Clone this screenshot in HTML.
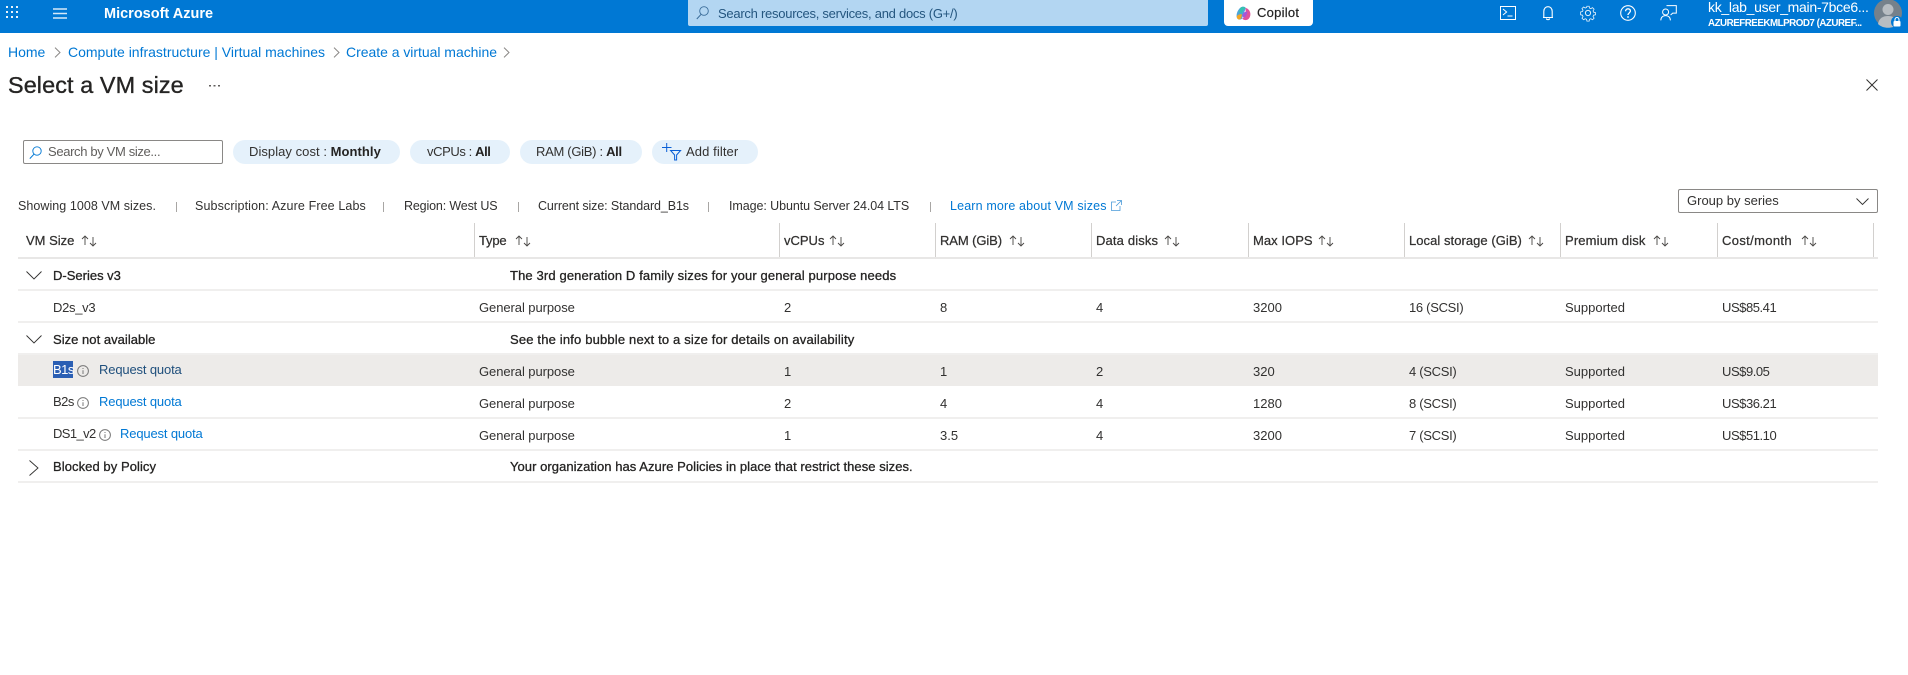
<!DOCTYPE html>
<html lang="en"><head><meta charset="utf-8"><title>Select a VM size</title>
<style>
html,body{margin:0;padding:0;background:#fff}
#p{position:relative;width:1908px;height:675px;overflow:hidden;background:#fff;font-family:"Liberation Sans",sans-serif;font-size:13px;color:#323130}
#p span,#p div,#p svg{position:absolute}
.t{white-space:nowrap;line-height:20px;height:20px}
.h{-webkit-text-stroke:.25px currentColor;color:#323130}
.g{-webkit-text-stroke:.3px currentColor;color:#252423}
.l{color:#0078d4}
.sep{width:1px;height:35px;top:223px;background:#d2d0ce}
.ln{left:18px;width:1860px;height:2px;background:#f0efee}
.pill{top:140px;height:24px;border-radius:12px;background:#e5f1fb}
.bar{width:1px;height:10px;top:202px;background:#a8a6a4}
.rq{letter-spacing:-.15px}
.us{letter-spacing:-.45px}
.sc{letter-spacing:-.3px}
svg{overflow:visible;fill:none}
</style></head><body><div id="p">

<div style="left:0;top:0;width:1908px;height:33px;background:#0078d4"></div>
<svg style="left:6px;top:6px" width="12" height="12"><g fill="#e8f3fb"><rect x="0" y="0" width="2" height="2"/><rect x="5" y="0" width="2" height="2"/><rect x="10" y="0" width="2" height="2"/><rect x="0" y="5" width="2" height="2"/><rect x="5" y="5" width="2" height="2"/><rect x="10" y="5" width="2" height="2"/><rect x="0" y="10" width="2" height="2"/><rect x="5" y="10" width="2" height="2"/><rect x="10" y="10" width="2" height="2"/></g></svg>
<svg style="left:53px;top:8px" width="14" height="11"><path d="M0 1h14M0 5.500h14M0 10h14" stroke="#d6e9f8" stroke-width="1.4"/></svg>
<span class="t" style="left:104px;top:4px;color:#fff;font-size:14.5px;font-weight:bold">Microsoft Azure</span>

<div style="left:688px;top:0;width:520px;height:26px;background:#b3d6f2;border-radius:0 0 2px 2px"></div>
<svg style="left:696px;top:6px" width="13" height="14"><circle cx="8" cy="5" r="4.3" stroke="#3a6c99" stroke-width=".9"/><path d="M5 8.400L.8 13" stroke="#3a6c99"/></svg>
<span class="t" style="left:718px;top:4px;color:#24567f;font-size:13px;letter-spacing:-.26px">Search resources, services, and docs (G+/)</span>

<div style="left:1224px;top:0;width:89px;height:26px;background:#fff;border-radius:0 0 4px 4px"></div>
<svg style="left:1236px;top:6px" width="15" height="15"><path d="M5 1.200C7 .2 9 .6 9.800 2L8 7 6 12.600C4 14.400 1.400 13.600.8 11.400.2 9 1 6 2.400 4 3.200 2.600 4 1.800 5 1.200z" fill="#4fa3d8"/><path d="M5 1.200C6.500.5 8.500.8 9.600 2 7.600 3.200 6.200 5.400 5.400 7.600L3 6.600C3.400 4.400 4 2.400 5 1.200z" fill="#36c2b0"/><path d="M1 10C2 8.600 3.800 8 6 8.400L5.400 11.400C5 13 3.400 14 2 13.200.8 12.400.5 11 1 10z" fill="#f5a623"/><path d="M9.600 2C11.600 2.200 13.600 4.200 14.200 6.600 14.800 9 14 12 12 13.400 10.600 14.400 8 14.400 6 12.600 8.200 12 9.200 10 9.600 8z" fill="#e0529c"/><path d="M8 6.400L11.400 5.400C11.200 8.400 9.800 11 7.600 12L6.200 9.400z" fill="#a557d8"/></svg>
<span class="t" style="left:1257px;top:3px;color:#242424;font-size:13px;-webkit-text-stroke:.2px #242424;letter-spacing:.25px">Copilot</span>

<svg style="left:1500px;top:6px" width="16" height="14"><rect x=".5" y=".5" width="15" height="13" stroke="#fff"/><path d="M3 3l3.600 3L3 9M7.500 10h5" stroke="#fff"/></svg>
<svg style="left:1542px;top:6px" width="12" height="15"><path d="M1 11.500h10M1.800 11.500V5.400C1.800 2.700 3.600 .7 6 .7s4.200 2 4.200 4.700v6.100M4.400 12.500C4.600 14 7.400 14 7.600 12.500" stroke="#fff" stroke-width="1.1"/></svg>
<svg style="left:1580px;top:5px" width="16" height="16"><circle cx="8" cy="8" r="2.6" stroke="#e3f0fa"/><path d="M6.800.7h2.400l.4 2 1.400.6 1.800-1.100 1.700 1.700-1.100 1.800.6 1.400 2 .4v2.400l-2 .4-.6 1.400 1.100 1.800-1.700 1.700-1.800-1.100-1.400.6-.4 2H6.800l-.4-2-1.400-.6-1.800 1.100-1.700-1.700 1.100-1.800-.6-1.400-2-.4V6.800l2-.4.6-1.400-1.100-1.800 1.700-1.700 1.800 1.100 1.400-.6z" stroke="#e3f0fa" stroke-width=".9" transform="translate(.6 .6) scale(.93)"/></svg>
<svg style="left:1620px;top:5px" width="16" height="16"><circle cx="8" cy="8" r="7.300" stroke="#fff" stroke-width="1.1"/><path d="M5.600 6.200C5.600 4.700 6.700 3.800 8 3.800s2.400.9 2.400 2.200c0 1.900-2.400 2-2.400 4" stroke="#fff" stroke-width="1.300"/><circle cx="8" cy="12" r=".9" fill="#fff"/></svg>
<svg style="left:1660px;top:5px" width="17" height="16"><path d="M6.500 .6h9.800v7.500h-3.600L10.600 10" stroke="#fff"/><circle cx="5.600" cy="7" r="3" stroke="#fff"/><path d="M.8 15.400C.8 12.400 2.800 10.600 5.600 10.600s4.800 1.800 4.800 4.800" stroke="#fff"/></svg>

<span class="t" style="left:1708px;top:-3px;color:#fff;font-size:14px;letter-spacing:-.3px">kk_lab_user_main-7bce6...</span>
<span class="t" style="left:1708px;top:14px;color:#fff;font-size:9.800px;font-weight:bold;letter-spacing:-.5px">AZUREFREEKMLPROD7 (AZUREF...</span>
<svg style="left:1874px;top:0" width="30" height="28"><circle cx="14" cy="13" r="14" fill="#76818b"/><circle cx="14" cy="9.500" r="5.500" fill="#b8bdc2"/><path d="M4 24C5 18 9 16 14 16s9 2 10 8c-5 5-15 5-20 0z" fill="#b8bdc2"/><circle cx="23" cy="22" r="6" fill="#0078d4"/><rect x="19.500" y="21" width="7" height="5.500" rx="1" fill="#fff"/><path d="M21 21v-1.500a2 2 0 014 0V21" stroke="#fff" stroke-width="1.1"/></svg>

<span class="t l" style="left:8px;top:42px;font-size:14px">Home</span>
<svg style="left:54px;top:47px" width="7" height="11"><path d="M1 .6L6 5.500 1 10.400" stroke="#8a8886"/></svg>
<span class="t l" style="left:68px;top:42px;font-size:14px">Compute infrastructure | Virtual machines</span>
<svg style="left:333px;top:47px" width="7" height="11"><path d="M1 .6L6 5.500 1 10.400" stroke="#8a8886"/></svg>
<span class="t l" style="left:346px;top:42px;font-size:14px;letter-spacing:-.03px">Create a virtual machine</span>
<svg style="left:503px;top:47px" width="7" height="11"><path d="M1 .6L6 5.500 1 10.400" stroke="#8a8886"/></svg>

<span class="t" style="left:8px;top:75px;font-size:23.400px;color:#252423;-webkit-text-stroke:.35px #252423;letter-spacing:.1px">Select a VM size</span>
<svg style="left:209px;top:84px" width="12" height="3"><g fill="#605e5c"><rect x="0" y="1" width="2" height="1.500"/><rect x="4.500" y="1" width="2" height="1.500"/><rect x="9" y="1" width="2" height="1.500"/></g></svg>
<svg style="left:1866px;top:79px" width="12" height="12"><path d="M.5.5l11 11M11.500.5l-11 11" stroke="#323130"/></svg>

<div style="left:23px;top:140px;width:198px;height:22px;border:1px solid #8a8886;border-radius:2px"></div>
<svg style="left:29px;top:146px" width="13" height="13"><circle cx="8" cy="5" r="4.200" stroke="#0078d4" stroke-width=".9"/><path d="M5 8.200L.8 12.600" stroke="#0078d4"/></svg>
<span class="t" style="left:48px;top:142px;color:#605e5c;letter-spacing:-.35px">Search by VM size...</span>

<div class="pill" style="left:233px;width:167px"></div>
<span class="t" style="left:249px;top:142px;letter-spacing:.05px">Display cost : <b style="color:#252423">Monthly</b></span>
<div class="pill" style="left:410px;width:100px"></div>
<span class="t" style="left:427px;top:142px;letter-spacing:-.4px">vCPUs : <b style="color:#252423">All</b></span>
<div class="pill" style="left:520px;width:122px"></div>
<span class="t" style="left:536px;top:142px;letter-spacing:-.3px">RAM (GiB) : <b style="color:#252423">All</b></span>
<div class="pill" style="left:652px;width:106px"></div>
<svg style="left:662px;top:143px" width="20" height="18"><path d="M0 4.500h9.500M4.700 0v9" stroke="#0a5fd6"/><path d="M8.600 7.500h10l-4 4.500v5h-2v-5z" stroke="#0a5fd6"/></svg>
<span class="t" style="left:686px;top:142px;letter-spacing:.1px">Add filter</span>

<span class="t" style="left:18px;top:196px;font-size:12.500px;letter-spacing:.05px">Showing 1008 VM sizes.</span>
<div class="bar" style="left:176px"></div>
<span class="t" style="left:195px;top:196px;font-size:12.500px;letter-spacing:.12px">Subscription: Azure Free Labs</span>
<div class="bar" style="left:383px"></div>
<span class="t" style="left:404px;top:196px;font-size:12.500px;letter-spacing:-.15px">Region: West US</span>
<div class="bar" style="left:518px"></div>
<span class="t" style="left:538px;top:196px;font-size:12.500px;letter-spacing:-.1px">Current size: Standard_B1s</span>
<div class="bar" style="left:708px"></div>
<span class="t" style="left:729px;top:196px;font-size:12.500px;letter-spacing:-.08px">Image: Ubuntu Server 24.04 LTS</span>
<div class="bar" style="left:930px"></div>
<span class="t l" style="left:950px;top:196px;font-size:12.500px;letter-spacing:.15px">Learn more about VM sizes</span>
<svg style="left:1111px;top:200px" width="11" height="11"><path d="M5 2H.5v8.500H9V6M6 .5h4.500V5M10.500.5L5 6" stroke="#4a9ad9" stroke-width=".8"/></svg>

<div style="left:1678px;top:189px;width:198px;height:22px;border:1px solid #8a8886;border-radius:2px"></div>
<span class="t" style="left:1687px;top:191px">Group by series</span>
<svg style="left:1856px;top:198px" width="13" height="7"><path d="M.5.5L6.500 6.500 12.500.5" stroke="#323130" stroke-width=".9"/></svg>

<!-- header -->
<span class="t h" style="left:26px;top:231px">VM Size</span>
<span class="t h" style="left:479px;top:231px;letter-spacing:-.2px">Type</span>
<span class="t h" style="left:784px;top:231px">vCPUs</span>
<span class="t h" style="left:940px;top:231px;letter-spacing:-.1px">RAM (GiB)</span>
<span class="t h" style="left:1096px;top:231px;letter-spacing:.15px">Data disks</span>
<span class="t h" style="left:1253px;top:231px;letter-spacing:.05px">Max IOPS</span>
<span class="t h" style="left:1409px;top:231px;letter-spacing:.05px">Local storage (GiB)</span>
<span class="t h" style="left:1565px;top:231px;letter-spacing:.15px">Premium disk</span>
<span class="t h" style="left:1722px;top:231px;letter-spacing:.35px">Cost/month</span>

<svg style="left:81px;top:235px" width="16" height="12"><path d="M4 10V1M1 4l3-3 3 3M12 2v9M9 8l3 3 3-3" stroke="#484644" stroke-width=".9"/></svg>
<svg style="left:515px;top:235px" width="16" height="12"><path d="M4 10V1M1 4l3-3 3 3M12 2v9M9 8l3 3 3-3" stroke="#484644" stroke-width=".9"/></svg>
<svg style="left:829px;top:235px" width="16" height="12"><path d="M4 10V1M1 4l3-3 3 3M12 2v9M9 8l3 3 3-3" stroke="#484644" stroke-width=".9"/></svg>
<svg style="left:1009px;top:235px" width="16" height="12"><path d="M4 10V1M1 4l3-3 3 3M12 2v9M9 8l3 3 3-3" stroke="#484644" stroke-width=".9"/></svg>
<svg style="left:1164px;top:235px" width="16" height="12"><path d="M4 10V1M1 4l3-3 3 3M12 2v9M9 8l3 3 3-3" stroke="#484644" stroke-width=".9"/></svg>
<svg style="left:1318px;top:235px" width="16" height="12"><path d="M4 10V1M1 4l3-3 3 3M12 2v9M9 8l3 3 3-3" stroke="#484644" stroke-width=".9"/></svg>
<svg style="left:1528px;top:235px" width="16" height="12"><path d="M4 10V1M1 4l3-3 3 3M12 2v9M9 8l3 3 3-3" stroke="#484644" stroke-width=".9"/></svg>
<svg style="left:1653px;top:235px" width="16" height="12"><path d="M4 10V1M1 4l3-3 3 3M12 2v9M9 8l3 3 3-3" stroke="#484644" stroke-width=".9"/></svg>
<svg style="left:1801px;top:235px" width="16" height="12"><path d="M4 10V1M1 4l3-3 3 3M12 2v9M9 8l3 3 3-3" stroke="#484644" stroke-width=".9"/></svg>

<div class="sep" style="left:474px"></div>
<div class="sep" style="left:779px"></div>
<div class="sep" style="left:935px"></div>
<div class="sep" style="left:1091px"></div>
<div class="sep" style="left:1248px"></div>
<div class="sep" style="left:1404px"></div>
<div class="sep" style="left:1560px"></div>
<div class="sep" style="left:1717px"></div>
<div class="sep" style="left:1873px"></div>

<div style="left:18px;top:355px;width:1860px;height:31px;background:#edebe9"></div>
<div class="ln" style="top:257px;background:#e8e7e6"></div>
<div class="ln" style="top:289px"></div>
<div class="ln" style="top:321px"></div>
<div class="ln" style="top:353px"></div>
<div class="ln" style="top:417px"></div>
<div class="ln" style="top:449px"></div>
<div class="ln" style="top:481px"></div>

<!-- groups -->
<svg style="left:26px;top:271px" width="16" height="9"><path d="M.5.5L8 8 15.500.5" stroke="#323130" stroke-width=".9"/></svg>
<span class="t g" style="left:53px;top:266px">D-Series v3</span>
<span class="t g" style="left:510px;top:266px;letter-spacing:.13px">The 3rd generation D family sizes for your general purpose needs</span>
<svg style="left:26px;top:335px" width="16" height="9"><path d="M.5.5L8 8 15.500.5" stroke="#323130" stroke-width=".9"/></svg>
<span class="t g" style="left:53px;top:330px;letter-spacing:.03px">Size not available</span>
<span class="t g" style="left:510px;top:330px;letter-spacing:.17px">See the info bubble next to a size for details on availability</span>
<svg style="left:29px;top:460px" width="10" height="16"><path d="M.5.5L9 8 .5 15.500" stroke="#323130" stroke-width=".9"/></svg>
<span class="t g" style="left:53px;top:457px;letter-spacing:.07px">Blocked by Policy</span>
<span class="t g" style="left:510px;top:457px;letter-spacing:.05px">Your organization has Azure Policies in place that restrict these sizes.</span>

<!-- D2s -->
<span class="t" style="left:53px;top:298px;letter-spacing:-.3px">D2s_v3</span>
<span class="t" style="left:479px;top:298px;letter-spacing:-.07px">General purpose</span>
<span class="t" style="left:784px;top:298px">2</span><span class="t" style="left:940px;top:298px">8</span><span class="t" style="left:1096px;top:298px">4</span><span class="t" style="left:1253px;top:298px">3200</span><span class="t sc" style="left:1409px;top:298px">16 (SCSI)</span><span class="t" style="left:1565px;top:298px">Supported</span><span class="t us" style="left:1722px;top:298px">US$85.41</span>

<!-- B1s -->
<div style="left:53px;top:361px;width:20px;height:17px;background:#2b5fb4"></div>
<span class="t" style="left:53px;top:360px;color:#fff;letter-spacing:-.5px">B1s</span>
<svg style="left:77px;top:365px" width="12" height="12"><circle cx="6" cy="6" r="5.400" stroke="#777"/><path d="M6 5.200v3.800M6 3v1" stroke="#777"/></svg>
<span class="t rq" style="left:99px;top:360px;color:#1f4f7c">Request quota</span>
<span class="t" style="left:479px;top:362px;letter-spacing:-.07px">General purpose</span>
<span class="t" style="left:784px;top:362px">1</span><span class="t" style="left:940px;top:362px">1</span><span class="t" style="left:1096px;top:362px">2</span><span class="t" style="left:1253px;top:362px">320</span><span class="t sc" style="left:1409px;top:362px">4 (SCSI)</span><span class="t" style="left:1565px;top:362px">Supported</span><span class="t us" style="left:1722px;top:362px">US$9.05</span>

<!-- B2s -->
<span class="t" style="left:53px;top:392px;letter-spacing:-.5px">B2s</span>
<svg style="left:77px;top:397px" width="12" height="12"><circle cx="6" cy="6" r="5.400" stroke="#777"/><path d="M6 5.200v3.800M6 3v1" stroke="#777"/></svg>
<span class="t l rq" style="left:99px;top:392px">Request quota</span>
<span class="t" style="left:479px;top:394px;letter-spacing:-.07px">General purpose</span>
<span class="t" style="left:784px;top:394px">2</span><span class="t" style="left:940px;top:394px">4</span><span class="t" style="left:1096px;top:394px">4</span><span class="t" style="left:1253px;top:394px">1280</span><span class="t sc" style="left:1409px;top:394px">8 (SCSI)</span><span class="t" style="left:1565px;top:394px">Supported</span><span class="t us" style="left:1722px;top:394px">US$36.21</span>

<!-- DS1 -->
<span class="t" style="left:53px;top:424px;letter-spacing:-.6px">DS1_v2</span>
<svg style="left:99px;top:429px" width="12" height="12"><circle cx="6" cy="6" r="5.400" stroke="#777"/><path d="M6 5.200v3.800M6 3v1" stroke="#777"/></svg>
<span class="t l rq" style="left:120px;top:424px">Request quota</span>
<span class="t" style="left:479px;top:426px;letter-spacing:-.07px">General purpose</span>
<span class="t" style="left:784px;top:426px">1</span><span class="t" style="left:940px;top:426px">3.5</span><span class="t" style="left:1096px;top:426px">4</span><span class="t" style="left:1253px;top:426px">3200</span><span class="t sc" style="left:1409px;top:426px">7 (SCSI)</span><span class="t" style="left:1565px;top:426px">Supported</span><span class="t us" style="left:1722px;top:426px">US$51.10</span>

</div></body></html>
